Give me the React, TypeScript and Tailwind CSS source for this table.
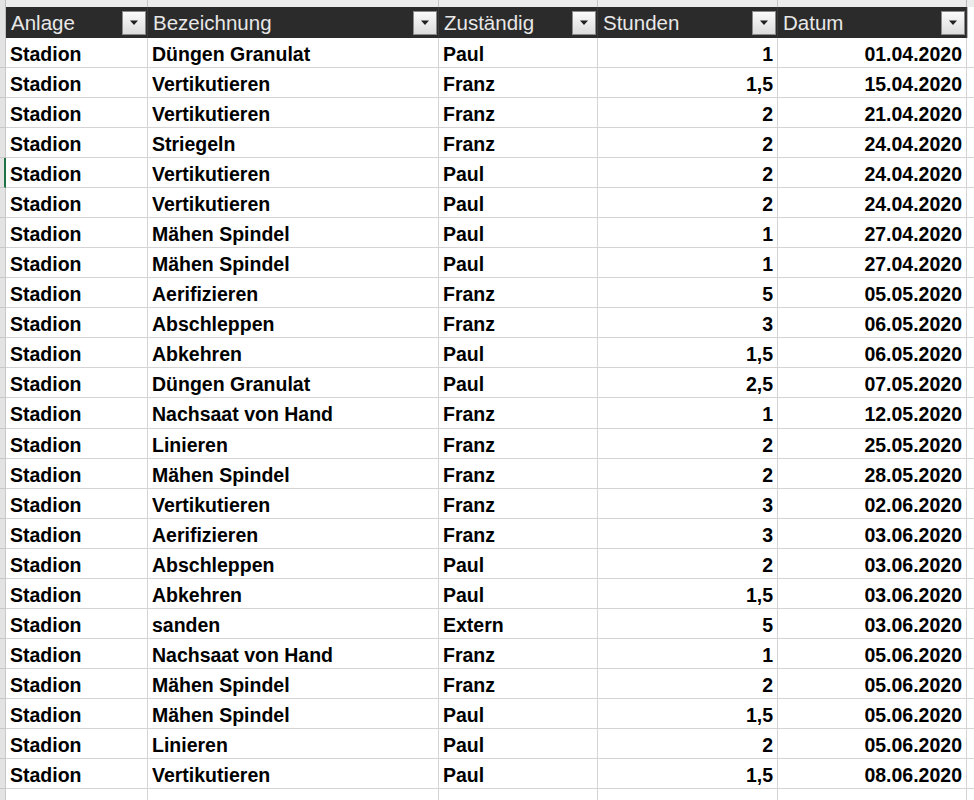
const ROWS: Array<[string, string, string, string, string]> = [
  ['Stadion', 'Düngen Granulat', 'Paul', '1', '01.04.2020'],
  ['Stadion', 'Vertikutieren', 'Franz', '1,5', '15.04.2020'],
  ['Stadion', 'Vertikutieren', 'Franz', '2', '21.04.2020'],
  ['Stadion', 'Striegeln', 'Franz', '2', '24.04.2020'],
  ['Stadion', 'Vertikutieren', 'Paul', '2', '24.04.2020'],
  ['Stadion', 'Vertikutieren', 'Paul', '2', '24.04.2020'],
  ['Stadion', 'Mähen Spindel', 'Paul', '1', '27.04.2020'],
  ['Stadion', 'Mähen Spindel', 'Paul', '1', '27.04.2020'],
  ['Stadion', 'Aerifizieren', 'Franz', '5', '05.05.2020'],
  ['Stadion', 'Abschleppen', 'Franz', '3', '06.05.2020'],
  ['Stadion', 'Abkehren', 'Paul', '1,5', '06.05.2020'],
  ['Stadion', 'Düngen Granulat', 'Paul', '2,5', '07.05.2020'],
  ['Stadion', 'Nachsaat von Hand', 'Franz', '1', '12.05.2020'],
  ['Stadion', 'Linieren', 'Franz', '2', '25.05.2020'],
  ['Stadion', 'Mähen Spindel', 'Franz', '2', '28.05.2020'],
  ['Stadion', 'Vertikutieren', 'Franz', '3', '02.06.2020'],
  ['Stadion', 'Aerifizieren', 'Franz', '3', '03.06.2020'],
  ['Stadion', 'Abschleppen', 'Paul', '2', '03.06.2020'],
  ['Stadion', 'Abkehren', 'Paul', '1,5', '03.06.2020'],
  ['Stadion', 'sanden', 'Extern', '5', '03.06.2020'],
  ['Stadion', 'Nachsaat von Hand', 'Franz', '1', '05.06.2020'],
  ['Stadion', 'Mähen Spindel', 'Franz', '2', '05.06.2020'],
  ['Stadion', 'Mähen Spindel', 'Paul', '1,5', '05.06.2020'],
  ['Stadion', 'Linieren', 'Paul', '2', '05.06.2020'],
  ['Stadion', 'Vertikutieren', 'Paul', '1,5', '08.06.2020'],
];

const HEADERS = ['Anlage', 'Bezeichnung', 'Zuständig', 'Stunden', 'Datum'];

// widths incl. right border: 142 / 291 / 159 / 180 / 189
const GRID = 'grid grid-cols-[6px_142px_291px_159px_180px_189px_7px]';

function FilterButton() {
  return (
    <div className="flex h-[24px] w-[24px] shrink-0 items-center justify-center border border-[#8a8a8a] bg-gradient-to-b from-[#fbfbfb] to-[#dcdcdc]">
      <svg width="10" height="6" viewBox="0 0 10 6">
        <path d="M1 0.5 L9 0.5 L5 5 Z" fill="#1f1f1f" />
      </svg>
    </div>
  );
}

export default function App() {
  return (
    <div
      className="h-[800px] w-[974px] overflow-hidden bg-white text-[19.5px]"
      style={{ fontFamily: '"Liberation Sans", Arial, sans-serif' }}
    >
      {/* previous row peeking at the top */}
      <div className={`${GRID} h-[7px] bg-[#ececec]`}>
        <div className="border-r border-[#bdbdbd] bg-[#e3e3e3]" />
        <div className="border-r border-[#c6c6c6]" />
        <div className="border-r border-[#c6c6c6]" />
        <div className="border-r border-[#c6c6c6]" />
        <div className="border-r border-[#c6c6c6]" />
        <div className="border-r border-[#b8b8b8]" />
        <div />
      </div>

      {/* header */}
      <div className={`${GRID} h-[31px]`}>
        <div className="border-r border-[#bdbdbd] bg-[#e3e3e3]" />
        {HEADERS.map((h) => (
          <div
            key={h}
            className="flex items-center justify-between border-r border-[#3a3a3a] bg-[#2b2b2b] pl-[5px] pr-[1px] text-[20.5px] text-[#e8e8e8]"
          >
            <span className="pt-[2px] leading-none">{h}</span>
            <FilterButton />
          </div>
        ))}
        <div className="border-l border-[#b8b8b8] bg-white" />
      </div>

      {/* body */}
      {ROWS.map((row, i) => (
        <div key={i} className={`${GRID} ${i === 12 ? 'h-[31px]' : 'h-[30px]'} leading-[24px]`}>
          <div
            className={`border-b border-r bg-[#e3e3e3] ${
              i === 4 ? 'border-r-2 border-r-[#217346] border-b-[#c8c8c8]' : 'border-[#c8c8c8]'
            }`}
          />
          <div className="flex items-center border-b border-r border-[#d4d4d4] pl-[4px] pt-[2px] font-bold text-black">
            {row[0]}
          </div>
          <div className="flex items-center border-b border-r border-[#d4d4d4] pl-[4px] pt-[2px] font-bold text-black">
            {row[1]}
          </div>
          <div className="flex items-center border-b border-r border-[#d4d4d4] pl-[4px] pt-[2px] font-bold text-black">
            {row[2]}
          </div>
          <div className="flex items-center justify-end border-b border-r border-[#d4d4d4] pr-[4px] pt-[2px] font-bold text-black">
            {row[3]}
          </div>
          <div className="flex items-center justify-end border-b border-r border-[#d4d4d4] pr-[4px] pt-[2px] font-bold text-black">
            {row[4]}
          </div>
          <div className="border-b border-[#d4d4d4]" />
        </div>
      ))}

      {/* empty row below */}
      <div className={`${GRID} h-[30px]`}>
        <div className="border-r border-[#c8c8c8] bg-[#e3e3e3]" />
        <div className="border-r border-[#d4d4d4]" />
        <div className="border-r border-[#d4d4d4]" />
        <div className="border-r border-[#d4d4d4]" />
        <div className="border-r border-[#d4d4d4]" />
        <div className="border-r border-[#d4d4d4]" />
        <div />
      </div>
    </div>
  );
}
